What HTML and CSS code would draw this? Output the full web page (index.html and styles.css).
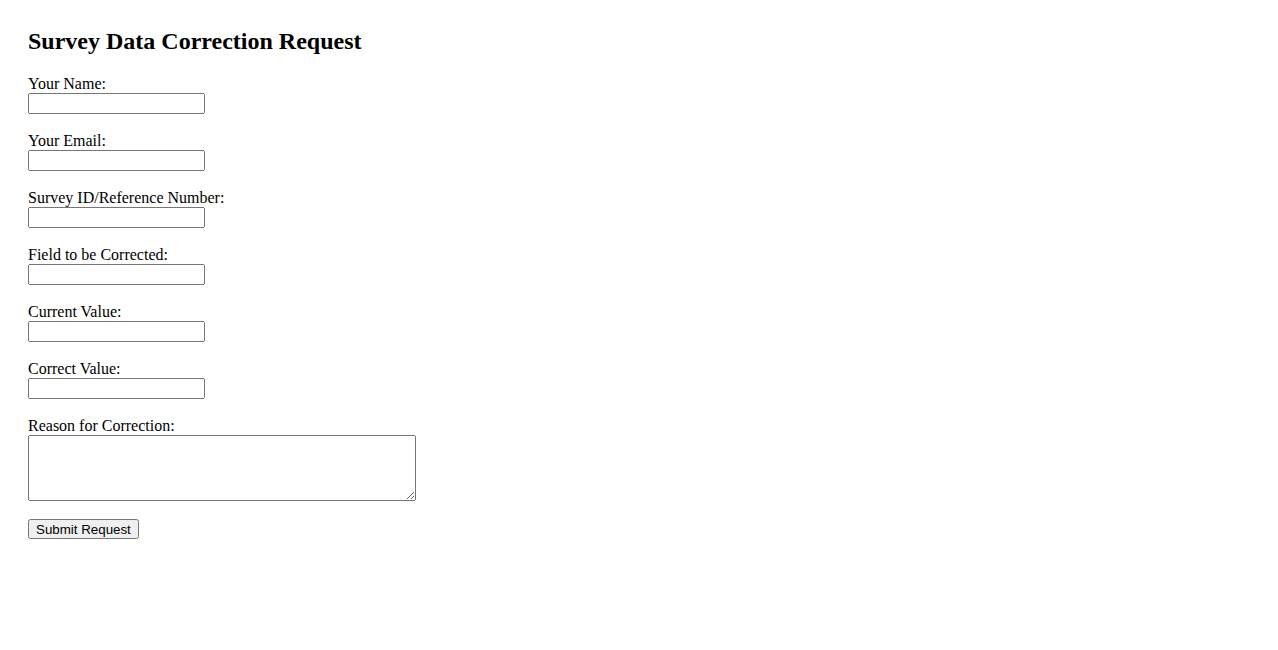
FILE: index.html
```html
<!DOCTYPE html>
<html lang="en">

<head>
    <meta charset="utf-8">
    <meta name="viewport" content="width=device-width, initial-scale=1.0">
    <title>Survey Data Correction Request</title>

    <link rel="stylesheet" href="styles.css">
</head>

<body>
    <h2>Survey Data Correction Request</h2>

    <form>
        <div class="felt">
            <label for="navn">Your Name:</label>
            <input type="text" id="navn" name="navn">
        </div>

        <div class="felt">
            <label for="email">Your Email:</label>
            <input type="email" id="email" name="email">
        </div>

        <div class="felt">
            <label for="survey">Survey ID/Reference Number:</label>
            <input type="text" id="survey" name="survey">
        </div>

        <div class="felt">
            <label for="felt">Field to be Corrected:</label>
            <input type="text" id="felt" name="felt">
        </div>

        <div class="felt">
            <label for="nu">Current Value:</label>
            <input type="text" id="nu" name="nu">
        </div>

        <div class="felt">
            <label for="ny">Correct Value:</label>
            <input type="text" id="ny" name="ny">
        </div>

        <div class="felt">
            <label for="grund">Reason for Correction:</label>
            <textarea id="grund" name="grund"></textarea>
        </div>

        <button type="submit">Submit Request</button>
    </form>
</body>

</html>
```

FILE: styles.css
```css
body {
    font-family: "Liberation Serif", "Times New Roman", serif;
    font-size: 16px;
    margin: 8px;
    padding: 20px;
    color: black;
    background-color: white;
}

h2 {
    font-size: 24px;
    margin: 0 0 20px 0;
}

label {
    display: block;
}

input {
    display: block;
    box-sizing: border-box;
    width: 177px;
    height: 21px;
}

textarea {
    display: block;
    box-sizing: border-box;
    width: 388px;
    height: 66px;
}

.felt {
    margin-bottom: 18px;
}

button {
    font-family: "Liberation Sans", Arial, sans-serif;
    font-size: 13.33px;
    box-sizing: border-box;
    height: 20px;
    padding: 0 6px;
}
```
